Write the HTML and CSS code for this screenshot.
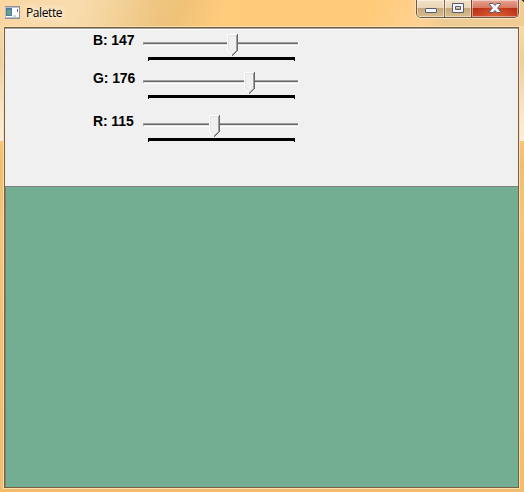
FILE: index.html
```html
<!DOCTYPE html>
<html lang="en">
<head>
<meta charset="utf-8">
<title>Palette</title>
<link rel="stylesheet" href="styles.css">
</head>
<body>
<div class="window">
  <header class="titlebar">
    <svg class="app-icon" width="16" height="14" viewBox="0 0 16 14" shape-rendering="crispEdges">
      <path fill="#8d929b" d="M0 0h15v13H0z"/>
      <path fill="#b9bfc7" d="M0 1h14v11H0z"/>
      <path fill="#fff" d="M1 2h13v9H1z"/>
      <path fill="#527ba0" d="M1 2h6v8H1z"/>
      <path fill="#5da48a" d="M2 4h4v5H2z"/>
      <path fill="#d4d8df" d="M8 9h3v2H8z"/>
      <path fill="#4b6a83" d="M12 3h1v3h-1z"/>
    </svg>
    <span class="title">Palette</span>
    <div class="buttons">
      <div class="button minimize">
        <svg width="12" height="5" viewBox="0 0 12 5"><rect x=".5" y=".5" width="11" height="4" rx=".5" fill="#f5f6fa" stroke="#555971"/></svg>
      </div>
      <div class="button maximize">
        <svg width="12" height="10" viewBox="0 0 12 10"><path fill="#f5f6fa" fill-rule="evenodd" stroke="#555971" d="M.5.5h11v9H.5zM3.500 3.500h5v3h-5z"/></svg>
      </div>
      <div class="button close">
        <svg width="12" height="10" viewBox="0 0 12 10"><path fill="#f5f6fa" stroke="#555971" stroke-linejoin="round" d="M.7.5h3.500L6 2.400 7.800.5h3.500v1.200L8.700 5l2.600 3.300v1.200H7.800L6 7.600 4.200 9.500H.7V8.300L3.300 5 .7 1.700z"/></svg>
      </div>
    </div>
  </header>
  <main class="client">
    <section class="controls">
      <div class="row">
        <span class="label">B: 147</span>
        <svg class="slider" width="157" height="27" viewBox="0 0 157 27" shape-rendering="crispEdges">
          <use href="#track"/><use href="#thumb" x="84"/>
        </svg>
      </div>
      <div class="row">
        <span class="label">G: 176</span>
        <svg class="slider" width="157" height="27" viewBox="0 0 157 27" shape-rendering="crispEdges">
          <use href="#track"/><use href="#thumb" x="101"/>
        </svg>
      </div>
      <div class="row">
        <span class="label">R: 115</span>
        <svg class="slider" width="157" height="27" viewBox="0 0 157 27" shape-rendering="crispEdges">
          <defs>
            <g id="track">
              <path fill="#fff" d="M0 8h156v4H0z"/>
              <path fill="#e3e3e3" d="M1 10h154v1H1z"/>
              <path fill="#a0a0a0" d="M0 8h155v1H1v2H0z"/>
              <path fill="#696969" d="M1 9h154v1H1z"/>
              <path fill="#000" d="M5 23h147v4h-1v-1H6v1H5z"/>
            </g>
            <g id="thumb">
              <path fill="#f0f0f0" d="M0 0h11v17H10v1H9v1H8v1H7v1H6v1H5v-1H4v-1H3v-1H2v-1H1v-1H0z"/>
              <path fill="#fff" d="M0 0h10v1H1v16h1v1h1v1h1v1h1v1h1v1H5v-1H4v-1H3v-1H2v-1H1v-1H0z"/>
              <path fill="#e3e3e3" d="M1 1h8v1H2v14h1v1h1v1h1v1h1v1H5v-1H4v-1H3v-1H2v-1H1z"/>
              <path fill="#a0a0a0" d="M9 1h1v16H9v1H8v1H7v1H6v1H5v-1h1v-1h1v-1h1v-1h1z"/>
              <path fill="#696969" d="M10 0h1v17h-1v1H9v1H8v1H7v1H6v1H5v-1h1v-1h1v-1h1v-1h1v-1h1z"/>
            </g>
          </defs>
          <use href="#track"/><use href="#thumb" x="66"/>
        </svg>
      </div>
    </section>
    <section class="swatch"></section>
  </main>
</div>
</body>
</html>
```
FILE: styles.css
```css
* {
  box-sizing: border-box;
}

body {
  margin: 0;
  overflow: hidden;
}

.window {
  width: 524px;
  height: 492px;
  display: flex;
  flex-direction: column;
  padding: 0 5px 3px 4px;
  background:
    linear-gradient(225deg, #3d3a33 1.5px, transparent 2px) 100% 0 / 4px 4px no-repeat,
    linear-gradient(110deg, #fad6a0 0, #f9dcae 75px, #f2cf95 120px, #eec47f 155px, #f0c278 175px, #ffcc7c 215px, #ffcb7a 350px, #ffd192 405px, #edcb94 425px, #f2cd94 524px) 0 0 / 524px 26px no-repeat,
    linear-gradient(180deg, #f8d9a8 0, #edcf9e 35px, #f8e6c9 85px, #faeedb 115px) 0 26px / 524px 115px no-repeat,
    linear-gradient(180deg, #f8c67a 141px, #edbd70 165px, #f5c579 220px, #f3c071 400px, #f1bd6c 492px);
}

.titlebar {
  height: 27px;
  flex: none;
  display: flex;
  align-items: flex-start;
}

.app-icon {
  margin: 6px 0 0 1px;
}

.title {
  margin: 5px 0 0 5px;
  padding-right: 6px;
  font: 12px/16px "Open Sans", "Noto Sans", sans-serif;
  letter-spacing: -0.4px;
  color: #000;
  text-shadow: 0 0 6px #fff5e4, 0 0 9px #fff5e4, 0 0 12px #fff5e4;
}

.buttons {
  display: flex;
  width: 103px;
  height: 18px;
  margin-left: auto;
  border: 1px solid #6c5a45;
  border-top: 0;
  border-radius: 0 0 5px 5px;
  box-shadow: 0 0 0 1px #fae5c0;
  overflow: hidden;
}

.button {
  display: flex;
  align-items: flex-start;
  box-shadow: inset 0 0 0 1px #ffffff70;
  background: linear-gradient(#f2e0c6 0, #ead5b6 8px, #c5a779 8px, #d8bd8c 17px);
}

.minimize {
  width: 28px;
  padding: 8px 0 0 8px;
  border-right: 1px solid #806a50;
}

.maximize {
  width: 27px;
  padding: 3px 0 0 7px;
  border-right: 1px solid #764333;
}

.close {
  width: 46px;
  padding: 3px 0 0 17px;
  background:
    radial-gradient(ellipse at 50% 100%, #ef713a99, transparent 65%),
    linear-gradient(#e6a593 0, #d77861 8px, #b82e15 8px, #c74526 17px);
}

.client {
  flex: 1;
  display: flex;
  flex-direction: column;
  width: 515px;
  margin-bottom: 1px;
  border: 1px solid #78603f;
  box-shadow: 0 0 0 1px #fae0b0;
}

.controls {
  height: 158px;
  flex: none;
  padding-top: 4px;
  background: #f0f0f0;
  border-top: 1px solid #a0a0a0;
  box-shadow: inset 0 1px #fff;
}

.row {
  display: flex;
  height: 38px;
  padding-left: 88px;
}

.row:nth-child(2) {
  height: 43px;
}

.label {
  width: 50px;
  margin-top: -1px;
  font: bold 14px/16px "Liberation Sans", Arial, sans-serif;
  letter-spacing: -0.1px;
  color: #000;
  white-space: pre;
}

.slider {
  margin-top: 1px;
}

.swatch {
  flex: 1;
  background: #73ae93;
  border-top: 1px solid #808080;
  border-left: 1px solid #808080;
}
```
